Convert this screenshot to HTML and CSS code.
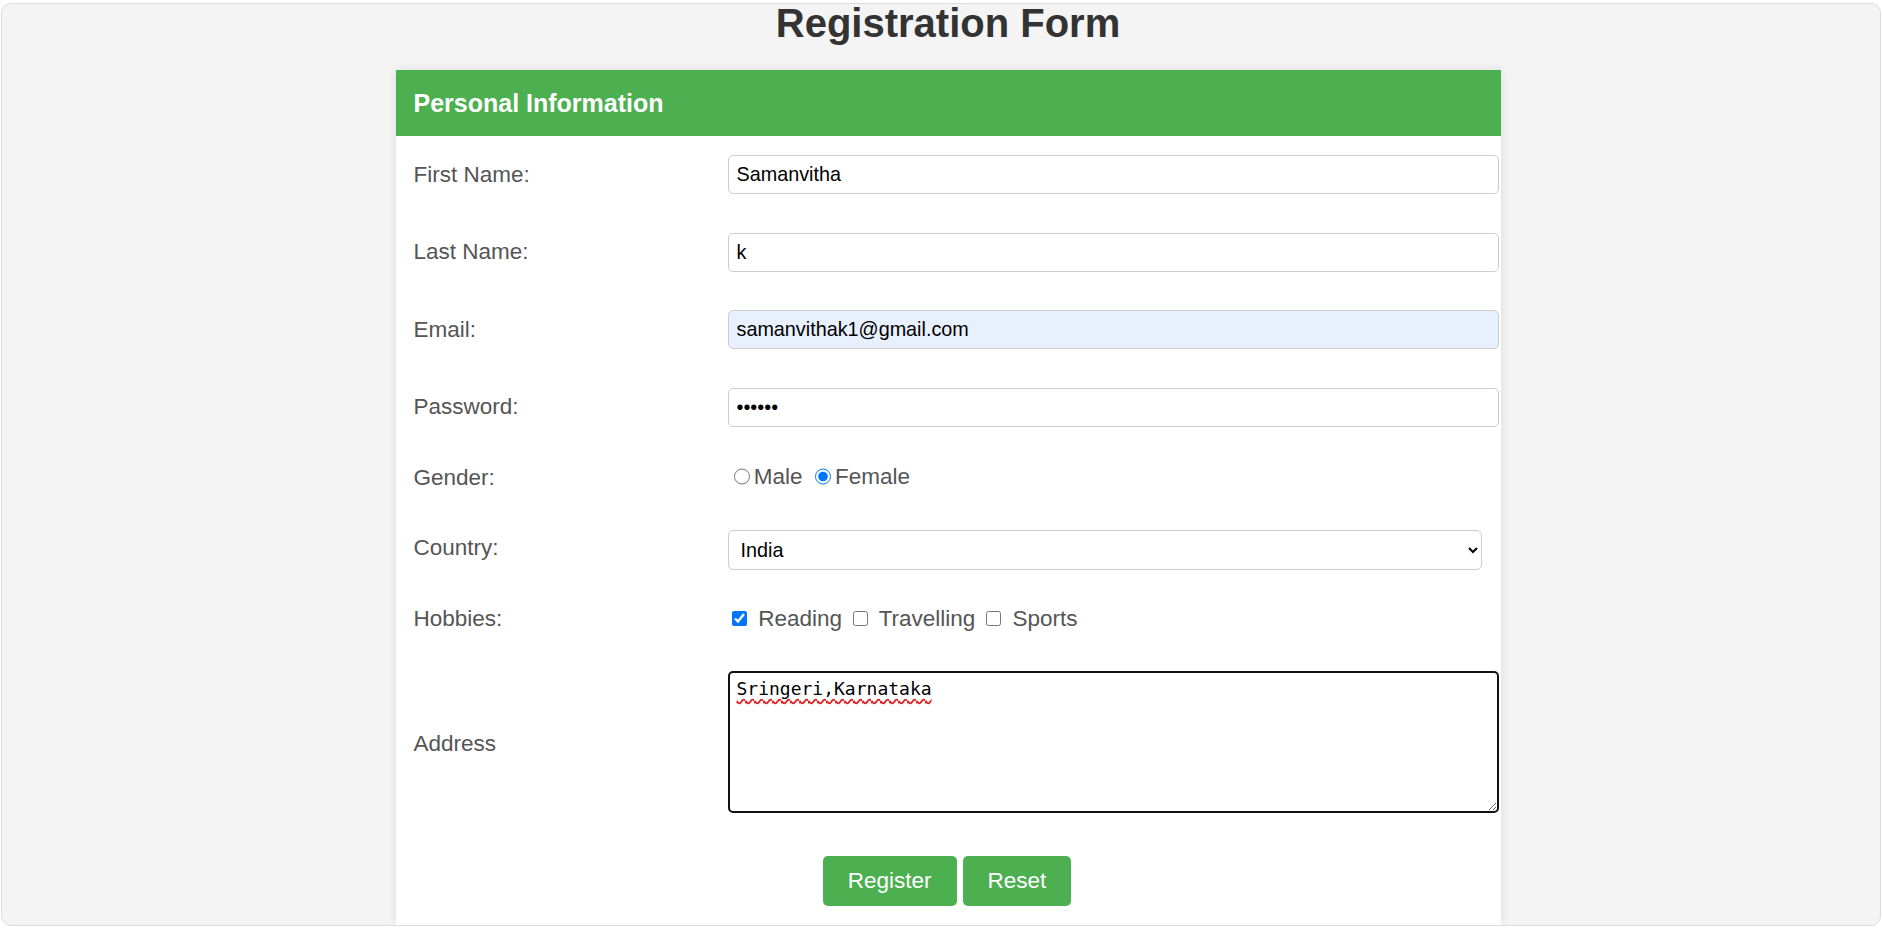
FILE: index.html
```html
<!DOCTYPE html>
<html lang="en">
<head>
<meta charset="utf-8">
<title>Registration Form</title>
<link rel="stylesheet" href="styles.css">
</head>
<body>
<div class="frame">
  <div class="page">
    <h1 class="title">Registration Form</h1>
    <div class="card">
      <div class="card-head">Personal Information</div>
      <form class="form">
        <label class="lbl" for="fn">First Name:</label>
        <div class="field"><input class="txt" id="fn" type="text" value="Samanvitha"></div>

        <label class="lbl" for="ln">Last Name:</label>
        <div class="field"><input class="txt" id="ln" type="text" value="k"></div>

        <label class="lbl" for="em">Email:</label>
        <div class="field"><input class="txt txt-auto" id="em" type="email" value="samanvithak1@gmail.com"></div>

        <label class="lbl" for="pw">Password:</label>
        <div class="field"><input class="txt" id="pw" type="password" value="123456"></div>

        <div class="lbl">Gender:</div>
        <div class="field opts"><input class="radio" type="radio" name="g" value="m">Male <input class="radio" type="radio" name="g" value="f" checked>Female</div>

        <label class="lbl" for="ct">Country:</label>
        <div class="field field-sel"><select class="sel" id="ct"><option>India</option><option>USA</option><option>UK</option></select></div>

        <div class="lbl">Hobbies:</div>
        <div class="field opts"><input class="check" type="checkbox" checked> Reading <input class="check" type="checkbox"> Travelling <input class="check" type="checkbox"> Sports</div>

        <label class="lbl lbl-area" for="ad">Address</label>
        <div class="field field-area"><textarea class="area" id="ad" spellcheck="false">Sringeri,Karnataka</textarea></div>

        <div class="actions">
          <button class="btn" type="button">Register</button>
          <button class="btn" type="reset">Reset</button>
        </div>
      </form>
    </div>
  </div>
</div>
</body>
</html>
```

FILE: styles.css
```css
html, body {
  margin: 0;
  background: #ffffff;
  font-family: "Liberation Sans", Arial, sans-serif;
}

.frame {
  margin: 3px 1px 0 1px;
  height: 921px;
  border: 1px solid #dcdcdc;
  border-radius: 10px;
  background: #f4f4f4;
}

.page {
  padding-left: 14px;
}

.title {
  margin: 0;
  text-align: center;
  font-size: 40px;
  line-height: 38px;
  font-weight: bold;
  color: #333333;
}

.card {
  width: 1105px;
  height: 855px;
  margin: 28px auto 0;
  background: #ffffff;
  box-shadow: 0 0 10px rgba(0, 0, 0, 0.1);
  clip-path: inset(-20px -20px 0 -20px);
}

.card-head {
  background: #4caf50;
  color: #ffffff;
  font-size: 25px;
  line-height: 29px;
  font-weight: bold;
  padding: 19px 18px 18px;
}

.form {
  display: grid;
  grid-template-columns: 332px 1fr;
  row-gap: 38.6px;
  align-items: center;
  padding: 19px 2px 0 0;
}

.lbl {
  padding-left: 18px;
  font-size: 22.5px;
  line-height: 24px;
  color: #555555;
}

.lbl-area {
  margin-top: 6px;
}

.txt {
  display: block;
  width: 100%;
  height: 39px;
  box-sizing: border-box;
  margin: 0;
  padding: 0 8px;
  border: 1px solid #cccccc;
  border-radius: 5px;
  background: #ffffff;
  font-family: "Liberation Sans", Arial, sans-serif;
  font-size: 19.8px;
  color: #000000;
  outline: none;
}

.txt-auto {
  background: #e8f0fe;
}

.opts {
  font-size: 22.5px;
  line-height: 24px;
  color: #555555;
}

.radio {
  width: 16.25px;
  height: 16.25px;
  margin: 3px 4px 0 6px;
  accent-color: #0075ff;
}

.check {
  width: 15px;
  height: 15px;
  margin: 3px 5px 0 4.5px;
  accent-color: #0075ff;
}

.field-sel {
  margin: 1.5px 0 -1.5px;
}

.sel {
  display: block;
  width: calc(100% - 17px);
  height: 40px;
  box-sizing: border-box;
  margin: 0;
  padding: 0 8px;
  border: 1px solid #cccccc;
  border-radius: 5px;
  background: #ffffff;
  font-family: "Liberation Sans", Arial, sans-serif;
  font-size: 19.8px;
  color: #000000;
}

.field-area {
  margin-top: 2px;
}

.area {
  display: block;
  width: 100%;
  height: 141.5px;
  box-sizing: border-box;
  margin: 0;
  padding: 5px 7px;
  border: 2px solid #111111;
  border-radius: 5px;
  font-family: "DejaVu Sans Mono", "Liberation Mono", monospace;
  font-size: 18px;
  color: #000000;
  text-decoration: underline wavy #e02020;
  text-decoration-skip-ink: none;
  text-underline-offset: 3px;
  outline: none;
}

.actions {
  grid-column: 1 / -1;
  display: flex;
  justify-content: center;
  gap: 6px;
  margin-top: 4px;
}

.btn {
  background: #4caf50;
  color: #ffffff;
  border: none;
  border-radius: 5px;
  font-family: "Liberation Sans", Arial, sans-serif;
  font-size: 22.5px;
  line-height: 25px;
  padding: 12.5px 25px;
  cursor: pointer;
}
```
